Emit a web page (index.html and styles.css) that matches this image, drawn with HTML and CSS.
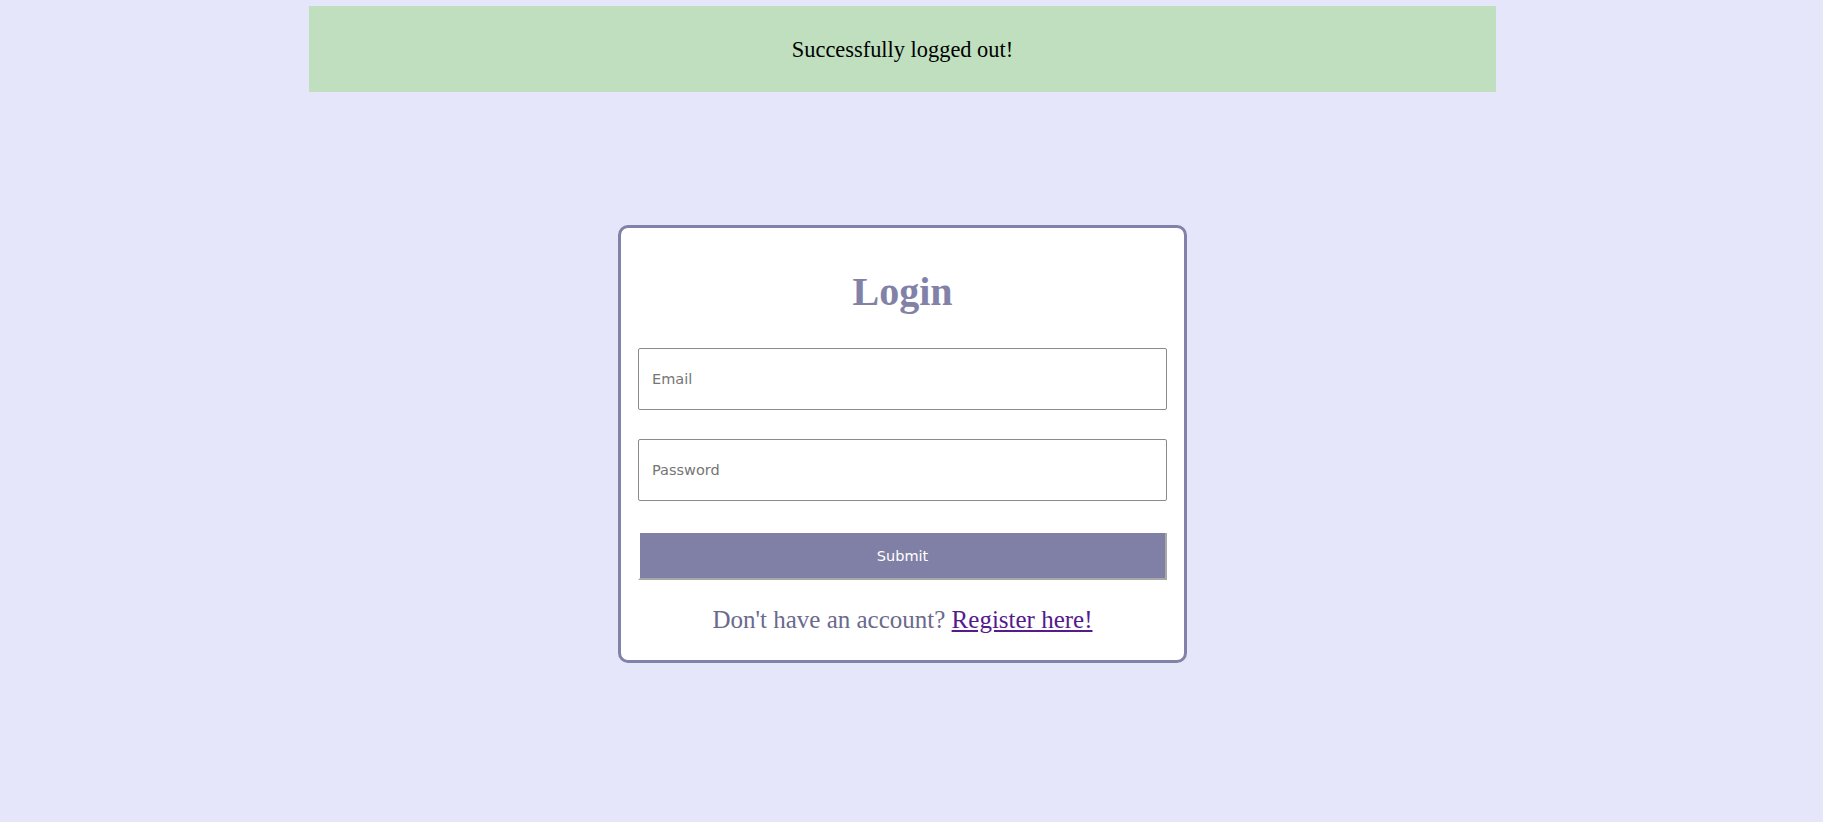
FILE: index.html
```html
<!DOCTYPE html>
<html lang="en">
<head>
    <meta charset="UTF-8">
    <meta name="viewport" content="width=device-width, initial-scale=1.0">
    <title>Login</title>
    <link rel="stylesheet" href="styles.css">
</head>
<body>
    <div class="page">
        <div class="flash-message">Successfully logged out!</div>

        <form class="login-card" onsubmit="return false;">
            <h1 class="login-title">Login</h1>
            <input class="login-input" type="email" name="email" placeholder="Email">
            <input class="login-input" type="password" name="password" placeholder="Password">
            <button class="login-button" type="submit">Submit</button>
            <p class="register-text">Don't have an account? <a href="#" class="register-link">Register here!</a></p>
        </form>
    </div>
</body>
</html>
```

FILE: styles.css
```css
body {
    margin: 0;
    background: #e6e6fa;
    font-family: "Liberation Serif", "Times New Roman", serif;
}
.page {
    width: 1805px;
    padding-top: 6px;
    display: flex;
    flex-direction: column;
    align-items: center;
}
.flash-message {
    box-sizing: border-box;
    width: 1187px;
    height: 86px;
    padding-top: 2px;
    background: #bfdfbf;
    color: #000;
    font-size: 22.4px;
    display: flex;
    align-items: center;
    justify-content: center;
}
.login-card {
    box-sizing: border-box;
    width: 569px;
    margin-top: 133px;
    padding: 0 17px 25px;
    background: #fff;
    border: 3px solid #8282a8;
    border-radius: 10px;
    display: flex;
    flex-direction: column;
}
.login-title {
    margin: 40px 0 32px;
    font-size: 40px;
    line-height: 48px;
    text-align: center;
    color: #8282a8;
}
.login-input {
    box-sizing: border-box;
    height: 62px;
    margin: 0 0 29px;
    padding: 0 13px;
    border: 1px solid #8a8a8a;
    border-radius: 2px;
    font-family: "DejaVu Sans", Verdana, sans-serif;
    font-size: 14.5px;
    color: #333;
    outline: none;
}
.login-input::placeholder {
    color: #757575;
}
.login-button {
    box-sizing: border-box;
    height: 47px;
    margin: 3px 0 0;
    background: #8080a6;
    color: #fff;
    border-style: solid;
    border-width: 0 2px 2px 2px;
    border-color: #fff #a8a8a8 #a8a8a8 #fff;
    font-family: "DejaVu Sans", Verdana, sans-serif;
    font-size: 14.5px;
    cursor: pointer;
}
.register-text {
    margin: 25px 0 0;
    font-size: 25px;
    line-height: 30px;
    text-align: center;
    color: #6a6a8c;
}
.register-link {
    color: #551a8b;
}
```
